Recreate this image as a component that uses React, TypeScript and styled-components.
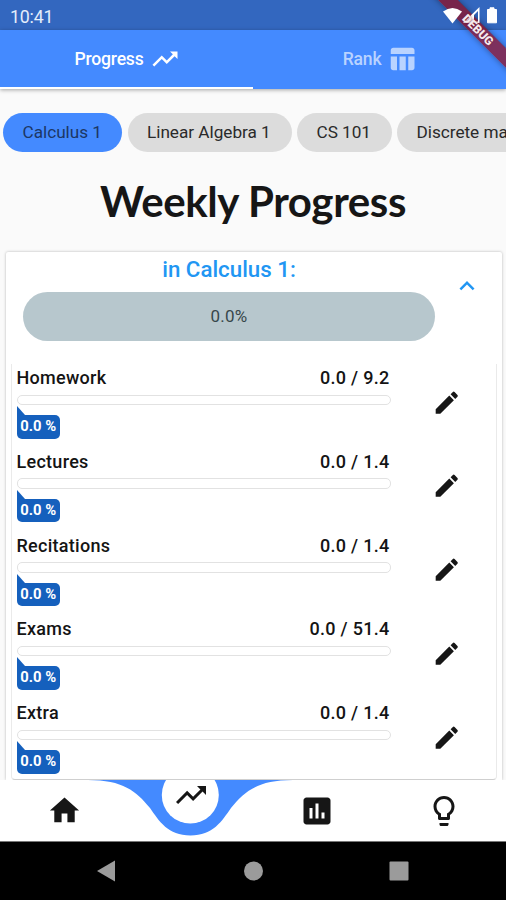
import React from 'react';
import styled, { createGlobalStyle } from 'styled-components';

const GlobalStyle = createGlobalStyle`
  * { box-sizing: border-box; }
  html, body { margin: 0; padding: 0; }
  body { font-family: Roboto, "Liberation Sans", sans-serif; background: #fafafa; overflow: hidden; }
`;

const Screen = styled.div`
  position: relative;
  width: 506px;
  height: 900px;
  overflow: hidden;
  display: flex;
  flex-direction: column;
  background: #fafafa;
  color: #161616;
`;

const StatusBar = styled.header`
  height: 30px;
  flex: none;
  display: flex;
  align-items: center;
  justify-content: space-between;
  padding: 2px 7px 0 10px;
  background: #3367bf;
  color: #e4edfb;
  font-size: 17.8px;
  letter-spacing: -0.2px;
`;

const StatusIcons = styled.div`
  display: flex;
  position: relative;
  z-index: 3;
`;

const BannerBand = styled.div`
  position: absolute;
  z-index: 2;
  left: 398px;
  top: 23px;
  width: 160px;
  height: 13.5px;
  transform: rotate(45deg);
  background: rgba(150, 10, 25, 0.7);
  box-shadow: 0 0 6px rgba(0, 0, 0, 0.4);
`;

const BannerText = styled.div`
  position: absolute;
  z-index: 4;
  left: 398px;
  top: 23px;
  width: 160px;
  height: 13.5px;
  transform: rotate(45deg);
  color: #f4e9ee;
  text-shadow: 0 0 2px rgba(110, 20, 50, 0.9);
  font-size: 12px;
  font-weight: 900;
  line-height: 14px;
  text-align: center;
`;

const Tabs = styled.nav`
  height: 59px;
  flex: none;
  display: flex;
  background: #448aff;
  box-shadow: 0 1px 4px rgba(0, 0, 0, 0.35);
`;

const Tab = styled.div<{ $active?: boolean }>`
  flex: 1;
  display: flex;
  align-items: center;
  justify-content: center;
  gap: 6px;
  padding: 1px 0 0 1px;
  border-bottom: 2.5px solid ${p => (p.$active ? '#fff' : 'transparent')};
  color: ${p => (p.$active ? '#fff' : '#b9d3ff')};
  font-size: 17.6px;
  font-weight: 500;
  letter-spacing: -0.2px;
`;

const Chips = styled.div`
  flex: none;
  display: flex;
  gap: 5.5px;
  margin-top: 24px;
  padding-left: 3px;
`;

const Chip = styled.div<{ $w: number; $active?: boolean }>`
  flex: none;
  width: ${p => p.$w}px;
  height: 39px;
  border-radius: 20px;
  padding-left: 19.5px;
  line-height: 39px;
  white-space: nowrap;
  font-size: 17.2px;
  letter-spacing: -0.02px;
  background: ${p => (p.$active ? '#448aff' : '#dcdcdc')};
  color: ${p => (p.$active ? '#1c3765' : '#2a2a2a')};
`;

const Title = styled.h1`
  flex: none;
  margin: 23px 0 0;
  height: 54px;
  line-height: 52px;
  text-align: center;
  font-family: Lato, sans-serif;
  font-size: 42px;
  font-weight: 700;
  letter-spacing: -0.4px;
  white-space: nowrap;
`;

const Card = styled.section`
  flex: none;
  display: flex;
  flex-direction: column;
  margin: 23px 4px 0 6px;
  height: 528px;
  border-radius: 2px 2px 0 0;
  background: #fff;
  box-shadow: 0 0 3px rgba(0, 0, 0, 0.28);
`;

const CardHead = styled.div`
  height: 112px;
  flex: none;
  display: flex;
  justify-content: space-between;
  padding: 4px 20px 0 17px;
`;

const Summary = styled.div`
  width: 412px;
  text-align: center;
`;

const Subject = styled.div`
  height: 36px;
  line-height: 27px;
  color: #2196f3;
  font-size: 22.3px;
  font-weight: 500;
`;

const TotalBar = styled.div`
  height: 49px;
  line-height: 49px;
  border-radius: 25px;
  background: #b7c7cd;
  color: #37474b;
  font-size: 17px;
  letter-spacing: 0.3px;
`;

const Collapse = styled.div`
  padding-top: 15px;
`;

const List = styled.div`
  height: 416px;
  flex: none;
  margin: 0 5px 0 5px;
  padding-left: 6px;
  border: 1px solid #eaeaea;
  border-width: 0 1px 1px;
  border-color: #eeeeee #eaeaea #cfcfcf;
  border-radius: 0 0 4px 4px;
`;

const Row = styled.div`
  height: 83.75px;
  display: flex;
`;

const Metric = styled.div`
  width: 373px;
  margin-left: -1.5px;
`;

const Labels = styled.div`
  display: flex;
  justify-content: space-between;
  height: 30.5px;
  line-height: 27px;
  font-size: 18px;
  font-weight: 500;
  letter-spacing: 0.28px;
  color: #141414;
`;

const Track = styled.div`
  width: 374px;
  height: 10.5px;
  border: 1px solid #e2e2e2;
  border-radius: 5px;
`;

const Pointer = styled.svg`
  display: block;
  margin-top: 1px;
`;

const Badge = styled.div`
  width: 43.5px;
  height: 23.5px;
  border-radius: 0 5px 5px 5px;
  background: #1560bd;
  color: #fff;
  font-size: 14.8px;
  font-weight: 700;
  line-height: 23px;
  text-align: center;
  white-space: nowrap;
`;

const Edit = styled.div`
  padding: 23.5px 0 0 42.5px;
`;

const BottomNav = styled.nav`
  position: relative;
  height: 62px;
  flex: none;
  background: #fff;
  border-bottom: 1px solid #777;
  display: grid;
  grid-template-columns: repeat(4, 1fr);
  justify-items: center;
`;

const Wave = styled.svg`
  position: absolute;
  left: 0;
  top: 0;
`;

const NavItem = styled.div<{ $raised?: boolean }>`
  position: relative;
  margin-left: 2px;
  margin-top: ${p => (p.$raised ? -3 : 13)}px;
`;

const SystemNav = styled.footer`
  flex: 1;
  background: #000;
`;

const Icon = ({ d, size = 30 }: { d: string; size?: number }) => (
  <svg width={size} height={size} viewBox="0 0 24 24" fill="currentColor" display="block">
    <path d={d} />
  </svg>
);

const TREND = 'M16 6l2.29 2.29-4.88 4.88-4-4L2 16.59 3.41 18l6-6 4 4 6.3-6.29L22 12V6z';
const TABLE = 'M10 10.02h5V21h-5zM17 21h3c1.1 0 2-.9 2-2v-9h-5v11zm3-18H5c-1.1 0-2 .9-2 2v3h19V5c0-1.1-.9-2-2-2zM3 19c0 1.1.9 2 2 2h3V10H3v9z';
const PENCIL = 'M3 17.25V21h3.75L17.81 9.94l-3.75-3.75L3 17.25zM20.71 7.04c.39-.39.39-1.02 0-1.41l-2.34-2.34a.9959.9959 0 0 0-1.41 0l-1.83 1.83 3.75 3.75 1.83-1.83z';
const HOME = 'M10 20v-6h4v6h5v-8h3L12 3 2 12h3v8z';
const POLL = 'M19 3H5c-1.1 0-2 .9-2 2v14c0 1.1.9 2 2 2h14c1.1 0 2-.9 2-2V5c0-1.1-.9-2-2-2zM9 17H7v-7h2v7zm4 0h-2V7h2v10zm4 0h-2v-4h2v4z';
const BULB = 'M9 21c0 .55.45 1 1 1h4c.55 0 1-.45 1-1v-1H9v1zm3-19C8.14 2 5 5.14 5 9c0 2.38 1.19 4.47 3 5.74V17c0 .55.45 1 1 1h6c.55 0 1-.45 1-1v-2.26c1.81-1.27 3-3.36 3-5.74 0-3.86-3.14-7-7-7zm2.85 11.1l-.85.6V16h-4v-2.3l-.85-.6C7.8 12.16 7 10.63 7 9c0-2.76 2.24-5 5-5s5 2.24 5 5c0 1.63-.8 3.16-2.15 4.1z';

const chips = [
  { label: 'Calculus 1', w: 119 },
  { label: 'Linear Algebra 1', w: 164 },
  { label: 'CS 101', w: 94.5 },
  { label: 'Discrete math', w: 146 },
];

const metrics = [
  ['Homework', '9.2'],
  ['Lectures', '1.4'],
  ['Recitations', '1.4'],
  ['Exams', '51.4'],
  ['Extra', '1.4'],
];

export default function App() {
  return (
    <>
      <GlobalStyle />
      <Screen>
        <StatusBar>
          <span>10:41</span>
          <StatusIcons>
            <svg width="56" height="18" viewBox="0 0 56 18" fill="#fff">
              <path d="M0 4.5Q9.500 -2.500 19 4.500L9.500 16.500Z" />
              <path fillRule="evenodd" d="M36.500 0V16H20ZM35 4L31 8V14.500H35Z" />
              <path d="M44.500 2.500h2.500V.8h4v1.700h2.500v13.300h-9z" stroke="#fff" strokeLinejoin="round" />
            </svg>
          </StatusIcons>
        </StatusBar>
        <BannerBand />
        <BannerText>DEBUG</BannerText>
        <Tabs>
          <Tab $active>Progress <Icon d={TREND} /></Tab>
          <Tab>Rank <Icon d={TABLE} /></Tab>
        </Tabs>
        <Chips>
          {chips.map((c, i) => (
            <Chip key={c.label} $w={c.w} $active={i === 0}>{c.label}</Chip>
          ))}
        </Chips>
        <Title>Weekly Progress</Title>
        <Card>
          <CardHead>
            <Summary>
              <Subject>in Calculus 1:</Subject>
              <TotalBar>0.0%</TotalBar>
            </Summary>
            <Collapse>
              <svg width="30" height="30" viewBox="0 0 24 24" fill="#2196f3">
                <path d="M12 8l-6 6 1.410 1.410L12 10.830l4.590 4.580L18 14z" />
              </svg>
            </Collapse>
          </CardHead>
          <List>
            {metrics.map(([name, max]) => (
              <Row key={name}>
                <Metric>
                  <Labels><span>{name}</span><span>0.0 / {max}</span></Labels>
                  <Track />
                  <Pointer width="10" height="9" viewBox="0 0 10 9"><path d="M0 0L8 9H0Z" fill="#1560bd" /></Pointer>
                  <Badge>0.0 %</Badge>
                </Metric>
                <Edit><Icon d={PENCIL} size={29.5} /></Edit>
              </Row>
            ))}
          </List>
        </Card>
        <BottomNav>
          <Wave width="506" height="56" viewBox="0 0 506 56">
            <path d="M88 0C123 0 136 11 150 28C159 41 168 55.500 190.500 55.500C213 55.500 222 41 231 28C245 11 258 0 293 0Z" fill="#448aff" />
            <circle cx="190.300" cy="15" r="28.500" fill="#fff" />
          </Wave>
          <NavItem><Icon d={HOME} size={35} /></NavItem>
          <NavItem $raised><Icon d={TREND} size={36} /></NavItem>
          <NavItem><Icon d={POLL} size={36} /></NavItem>
          <NavItem><Icon d={BULB} size={36} /></NavItem>
        </BottomNav>
        <SystemNav>
          <svg width="506" height="58" viewBox="0 0 506 58" fill="#9b9b9b">
            <path d="M97 29L115 18.500V39.500Z" />
            <circle cx="253.500" cy="29" r="9.500" />
            <rect x="389.500" y="19.500" width="19" height="19" rx="1" />
          </svg>
        </SystemNav>
      </Screen>
    </>
  );
}
